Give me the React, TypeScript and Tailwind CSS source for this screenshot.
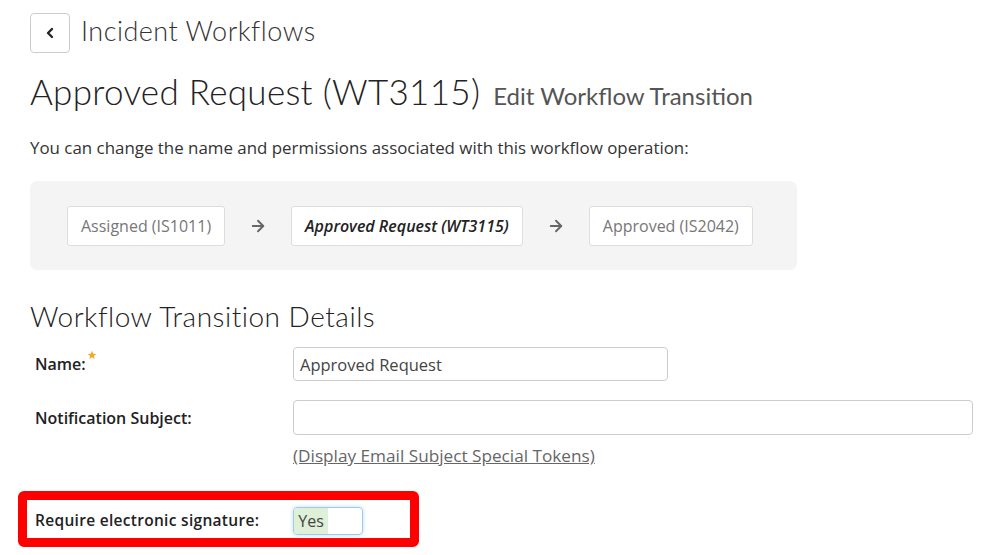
import { ChevronLeft, ArrowRight } from "lucide-react";

const head = { fontFamily: '"Lato", "Open Sans", sans-serif' };
const body = { fontFamily: '"Open Sans", "Liberation Sans", sans-serif' };

function Step({ label, active }: { label: string; active?: boolean }) {
  return (
    <div
      className={
        "h-10 px-[13px] flex items-center bg-white border border-[#dddddd] rounded-[3px] text-[16px] " +
        (active ? "text-[#222] font-semibold italic" : "text-[#777]")
      }
    >
      {label}
    </div>
  );
}

export default function App() {
  return (
    <div className="w-[1000px] h-[555px] bg-white overflow-hidden text-[#333]" style={body}>
      <div className="pl-[30px] pt-[13px]">
        <div className="flex items-center gap-[11px]">
          <button className="w-10 h-10 border border-[#cccccc] rounded-[4px] flex items-center justify-center">
            <ChevronLeft size={16} strokeWidth={3.5} className="text-[#222]" />
          </button>
          <h2 className="text-[27px] font-light tracking-[0.5px] text-[#333] mt-[-4px]" style={head}>
            Incident Workflows
          </h2>
        </div>

        <div className="flex items-baseline gap-[13px] mt-[14px]">
          <h1 className="text-[35px] font-light tracking-[0.3px] text-[#222] leading-[48px]" style={head}>
            Approved Request (WT3115)
          </h1>
          <span className="text-[24px] text-[#555] font-normal" style={head}>
            Edit Workflow Transition
          </span>
        </div>

        <p className="text-[16.9px] text-[#333] mt-[20px]">
          You can change the name and permissions associated with this workflow operation:
        </p>

        <div className="w-[767px] h-[89px] mt-[21px] bg-[#f4f4f4] rounded-[7px] flex items-center pl-[37px] gap-[24px]">
          <Step label="Assigned (IS1011)" />
          <ArrowRight size={18} strokeWidth={2.5} className="text-[#666]" />
          <Step label="Approved Request (WT3115)" active />
          <ArrowRight size={18} strokeWidth={2.5} className="text-[#666]" />
          <Step label="Approved (IS2042)" />
        </div>

        <h3 className="text-[28px] font-light tracking-[0.5px] text-[#222] mt-[25px]" style={head}>
          Workflow Transition Details
        </h3>

        <div className="mt-[10px] flex items-center">
          <label className="w-[263px] pl-[5px] text-[16px] font-semibold text-[#222] flex items-start">
            Name:
            <svg width="10" height="10" viewBox="0 0 24 24" className="mt-[-2px] ml-[1px]" fill="#f5a623">
              <path d="M12 2l2.9 6.9 7.1.6-5.4 4.7 1.7 7.3L12 17.6 5.7 21.5l1.7-7.3L2 9.5l7.1-.6z" />
            </svg>
          </label>
          <input
            defaultValue="Approved Request"
            className="w-[375px] h-[34px] border border-[#cccccc] rounded-[4px] px-[6px] text-[16.5px] text-[#444] outline-none"
          />
        </div>

        <div className="mt-[19px] flex items-center">
          <label className="w-[263px] pl-[5px] text-[16px] font-semibold text-[#222]">Notification Subject:</label>
          <input className="w-[680px] h-[35px] border border-[#cccccc] rounded-[4px] px-[6px] outline-none" />
        </div>
        <div className="pl-[263px] mt-[8px]">
          <a className="text-[17.2px] text-[#666] underline">(Display Email Subject Special Tokens)</a>
        </div>

        <div className="ml-[-12px] mt-[22px] w-[401px] h-[56px] border-[9px] border-[#ff0000] rounded-[6px] flex items-center pt-[3px]">
          <label className="w-[266px] pl-[8px] text-[15.5px] font-semibold text-[#222] tracking-[0.3px]">
            Require electronic signature:
          </label>
          <div className="w-[70px] h-[28px] border border-[#9ecaed] rounded-[4px] shadow-[0_0_4px_#bcdcf5] flex overflow-hidden">
            <span className="w-[34px] bg-[#dff0d8] text-[#444] text-[16px] flex items-center justify-center">Yes</span>
          </div>
        </div>
      </div>
    </div>
  );
}
